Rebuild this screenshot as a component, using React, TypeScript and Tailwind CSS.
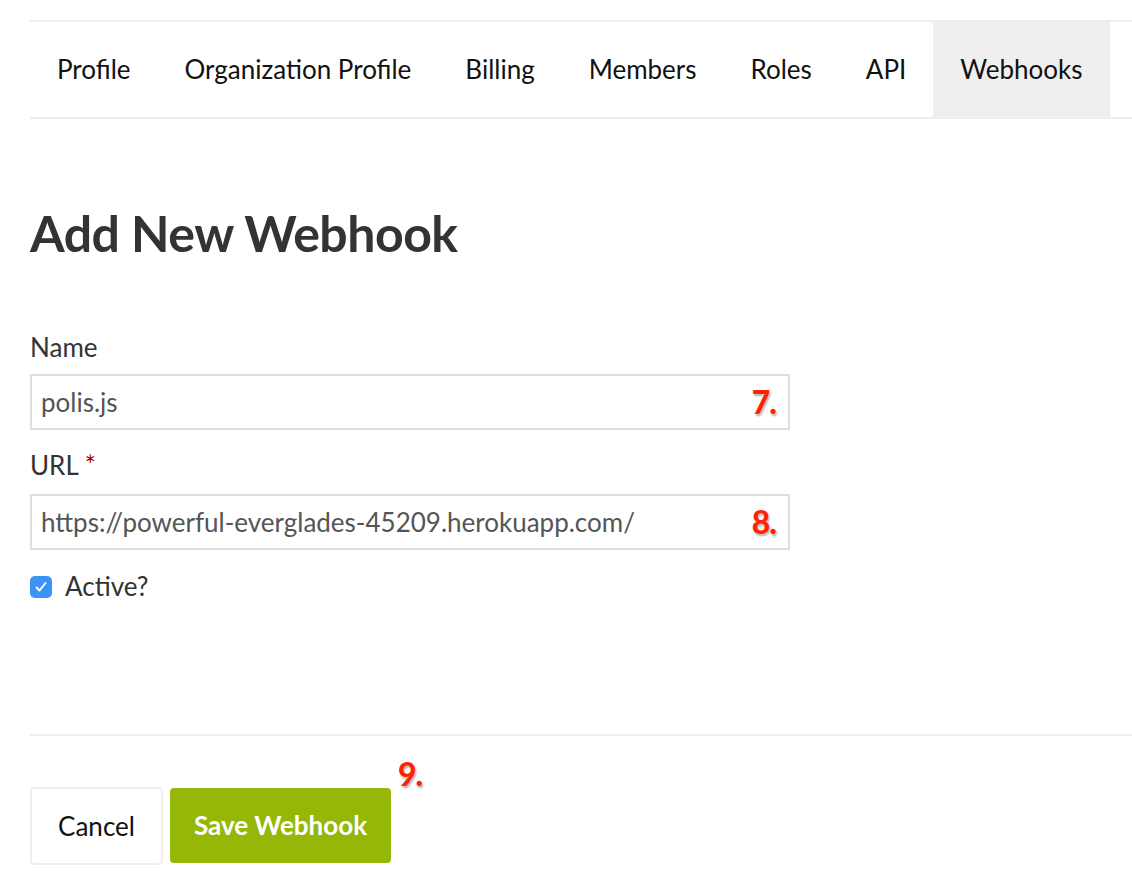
const tabs = ['Profile', 'Organization Profile', 'Billing', 'Members', 'Roles', 'API', 'Webhooks'];

const Marker = ({ n }: { n: string }) => (
  <span className="font-['Lato',sans-serif] text-[32px] font-black leading-none tracking-[-1px] text-[#ff2200] [text-shadow:0_0_2px_#fff,1px_2px_2px_rgba(0,0,0,0.35)]">
    {n}
  </span>
);

export default function App() {
  return (
    <div className="min-h-[892px] bg-white pl-[30px] pt-[20px] font-['Lato',sans-serif] text-[#333]">
      <nav className="flex h-[99px] border-y-2 border-[#eeeeee]">
        {tabs.map((tab) => (
          <div
            key={tab}
            className={`flex items-center px-[27px] text-[26px] text-[#111] ${tab === 'Webhooks' ? 'bg-[#efefef]' : ''}`}
          >
            {tab}
          </div>
        ))}
      </nav>

      <h1 className="mt-[84px] text-[50px] font-bold leading-[60px] tracking-[-0.5px] text-[#333]">Add New Webhook</h1>

      <form className="mt-[69px] w-[760px]">
        <label className="block text-[26px] leading-[31px]">Name</label>
        <div className="mt-[11px] flex h-[56px] items-center justify-between border-2 border-[#dddddd] pl-[9px] pr-[12px]">
          <span className="text-[26px] text-[#555]">polis.js</span>
          <Marker n="7." />
        </div>

        <label className="mt-[20px] block text-[26px] leading-[31px]">
          URL <span className="text-[#a30000]">*</span>
        </label>
        <div className="mt-[13px] flex h-[56px] items-center justify-between border-2 border-[#dddddd] pl-[9px] pr-[12px]">
          <span className="text-[26px] text-[#555]">https://powerful-everglades-45209.herokuapp.com/</span>
          <Marker n="8." />
        </div>

        <div className="mt-[21px] flex items-center gap-[13px] leading-[31px]">
          <span className="flex h-[22px] w-[22px] items-center justify-center rounded-[5px] bg-[#3a93f5]">
            <svg width="14" height="14" viewBox="0 0 14 14" fill="none">
              <path d="M2.5 7.5 L5.5 10.5 L11.5 3" stroke="#fff" strokeWidth="2" strokeLinecap="round" strokeLinejoin="round" />
            </svg>
          </span>
          <span className="text-[26px] text-[#333]">Active?</span>
        </div>
      </form>

      <div className="mt-[132px] border-t-2 border-[#eeeeee]" />

      <div className="relative mt-[51px] flex gap-[7px]">
        <button className="h-[78px] w-[133px] rounded-[4px] border-2 border-[#eeeeee] bg-white text-[26px] text-[#111]">
          Cancel
        </button>
        <button className="mt-px h-[75px] w-[221px] rounded-[4px] bg-[#95b808] text-[26px] font-bold text-white">
          Save Webhook
        </button>
        <span className="absolute left-[368px] top-[-29px]">
          <Marker n="9." />
        </span>
      </div>
    </div>
  );
}
